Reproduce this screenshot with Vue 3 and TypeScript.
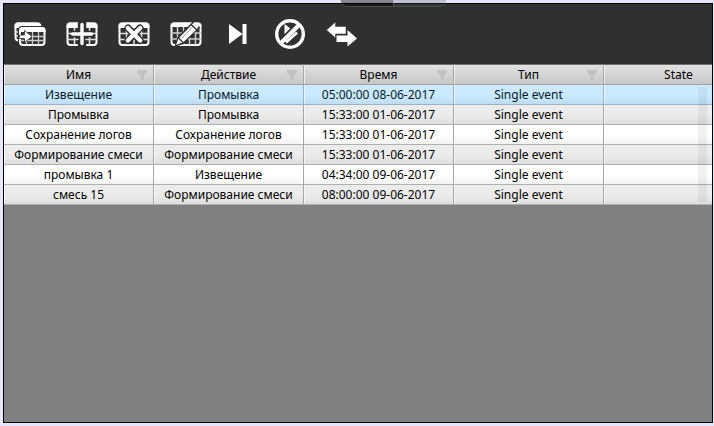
<script setup lang="ts">
import { ref } from 'vue'

interface EventRow {
  name: string
  action: string
  time: string
  type: string
  state: string
}

const columns = ['Имя', 'Действие', 'Время', 'Тип', 'State']

const rows: EventRow[] = [
  { name: 'Извещение', action: 'Промывка', time: '05:00:00 08-06-2017', type: 'Single event', state: '' },
  { name: 'Промывка', action: 'Промывка', time: '15:33:00 01-06-2017', type: 'Single event', state: '' },
  { name: 'Сохранение логов', action: 'Сохранение логов', time: '15:33:00 01-06-2017', type: 'Single event', state: '' },
  { name: 'Формирование смеси', action: 'Формирование смеси', time: '15:33:00 01-06-2017', type: 'Single event', state: '' },
  { name: 'промывка 1', action: 'Извещение', time: '04:34:00 09-06-2017', type: 'Single event', state: '' },
  { name: 'смесь 15', action: 'Формирование смеси', time: '08:00:00 09-06-2017', type: 'Single event', state: '' },
]

const selected = ref(0)
</script>

<template>
  <main class="page">
    <div class="handle"><span></span><span></span></div>
    <section class="panel">
      <nav class="toolbar">
        <button type="button" aria-label="Copy event">
          <svg viewBox="0 0 32 32">
            <path d="M4 22.500Q1.500 22 1.500 19.500V8Q1.500 5.500 4 5.500H24" fill="none" stroke="#fff" stroke-width="2" />
            <path d="M.5 10V8Q.5 4.500 4 4.500H24Q27 4.500 27.500 8H8Q5 8 4.500 10Z" fill="#fff" />
            <path d="M1 14H4M1 18H4" stroke="#ddd" stroke-width="1.500" />
            <rect x="6" y="10" width="24.500" height="17" rx="3" fill="#303030" stroke="#fff" stroke-width="2" />
            <path d="M5 14V12Q5.500 9 9 9H28Q31.500 9 31.500 12V14Z" fill="#fff" />
            <path d="M6 18.500H31M6 22.500H31M12.500 14V27M18.500 14V27M24.500 14V27" stroke="#ccc" stroke-width="1.300" />
            <path d="M5.500 17H10.500V12.500L18 18.500L10.500 24.500V20.500H5.500Z" fill="#fff" stroke="#303030" stroke-width=".8" />
          </svg>
        </button>
        <button type="button" aria-label="Add event">
          <svg viewBox="0 0 32 32">
            <rect x="1.500" y="5.500" width="29" height="21.500" rx="3" fill="none" stroke="#fff" stroke-width="2" />
            <path d="M.5 10V8Q.5 4.500 4 4.500H28Q31.500 4.500 31.500 8V10Z" fill="#fff" />
            <path d="M1 15.500H31M1 21.500H31M8.500 10V27M23.500 10V27" stroke="#ddd" stroke-width="1.600" />
            <path d="M16 3V10M16 22V29" stroke="#303030" stroke-width="8.500" />
            <path d="M16 4V27M5.500 16H26.500" stroke="#303030" stroke-width="6.500" />
            <path d="M16 6.500V25.500M6.500 16H25.500" stroke="#fff" stroke-width="3.400" stroke-linecap="round" />
          </svg>
        </button>
        <button type="button" aria-label="Delete event">
          <svg viewBox="0 0 32 32">
            <rect x="1.500" y="5.500" width="29" height="21.500" rx="3" fill="none" stroke="#fff" stroke-width="2" />
            <path d="M.5 10V8Q.5 4.500 4 4.500H28Q31.500 4.500 31.500 8V10Z" fill="#fff" />
            <path d="M1 15.500H31M1 21.500H31M8.500 10V27M16 10V27M23.500 10V27" stroke="#ddd" stroke-width="1.500" />
            <path d="M10 10L22 22.500M22 10L10 22.500" stroke="#303030" stroke-width="7" stroke-linecap="round" />
            <path d="M9.800 10L22.200 22.500M22.200 10L9.800 22.500" stroke="#fff" stroke-width="4.200" stroke-linecap="round" />
          </svg>
        </button>
        <button type="button" aria-label="Edit event">
          <svg viewBox="0 0 32 32">
            <rect x="1.500" y="5.500" width="29" height="21.500" rx="3" fill="none" stroke="#fff" stroke-width="2" />
            <path d="M.5 9V8Q.5 4.500 4 4.500H28Q31.500 4.500 31.500 8V9Z" fill="#fff" />
            <path d="M1 15H31M1 21H31M7.500 9V27M13.500 9V27M19.500 9V27M25.500 9V27" stroke="#ccc" stroke-width="1.500" />
            <path d="M4.500 29L7.500 19L23 3.500L30 9.500L13.500 26Z" fill="#303030" />
            <path d="M6 27L8.300 20.800L12.300 24.600Z" fill="#fff" />
            <path d="M9.200 19.800L21 7.500L26 12L13.500 24Z" fill="#fff" />
            <path d="M22 6.500L23.500 5Q25 4 27 6T28 9.500L26.800 11Z" fill="#fff" />
            <path d="M11.500 20.500L22 9.500" stroke="#666" stroke-width=".7" />
          </svg>
        </button>
        <button type="button" aria-label="Run next">
          <svg viewBox="0 0 32 32">
            <path d="M7 6L20.500 16L7 26ZM20.500 6H24.500V26H20.500Z" fill="#fff" />
          </svg>
        </button>
        <button type="button" aria-label="Disable event">
          <svg viewBox="0 0 32 32">
            <path d="M10.500 6L23.500 16L10.500 26Z" fill="#fff" />
            <path d="M5.500 26.500L26.500 5.500" stroke="#303030" stroke-width="7.500" />
            <path d="M6 26L26 6" stroke="#fff" stroke-width="4" />
            <path d="M12 24.500L23 14.500" stroke="#fff" stroke-width="2.600" />
            <circle cx="16" cy="16" r="13.300" fill="none" stroke="#fff" stroke-width="3.400" />
          </svg>
        </button>
        <button type="button" aria-label="Transfer events">
          <svg viewBox="0 0 32 32">
            <path d="M10.500 17.500H21.500V12L31 20.500L21.500 28.500V24H10.500Z" fill="#fff" />
            <path d="M.5 12L9.500 4V8.500H20V16H9.500V20Z" fill="#fff" stroke="#303030" stroke-width=".5" />
          </svg>
        </button>
      </nav>
      <div class="grid">
        <table>
          <thead>
            <tr>
              <th v-for="column in columns" :key="column" scope="col">
                {{ column }}
                <svg class="filter" viewBox="0 0 10 10">
                  <path d="M0 0H10V2L7 5.500V10H3.500V5.500L0 2Z" fill="#c2c2c2" />
                </svg>
              </th>
            </tr>
          </thead>
          <tbody>
            <tr v-for="(row, i) in rows" :key="i" :class="{ selected: i === selected }" @click="selected = i">
              <td>{{ row.name }}</td>
              <td>{{ row.action }}</td>
              <td>{{ row.time }}</td>
              <td>{{ row.type }}</td>
              <td>{{ row.state }}</td>
            </tr>
          </tbody>
        </table>
        <div class="scrollbar"></div>
      </div>
    </section>
  </main>
</template>

<style>
body {
  background: #e6e6fa;
}
</style>

<style scoped>
.page {
  box-sizing: border-box;
  display: flex;
  min-height: 100vh;
  padding: 3px 1px 3px 3px;
  position: relative;
}
.panel {
  background: #808080;
  border: 1px solid #000;
  flex: 1;
  min-width: 0;
}
.handle {
  border: 1px solid rgba(120, 120, 120, 0.35);
  border-radius: 0 0 14px 14px;
  border-top: 0;
  box-sizing: border-box;
  display: flex;
  height: 7px;
  left: 340px;
  overflow: hidden;
  position: absolute;
  top: 0;
  width: 106px;
}
.handle span {
  background: linear-gradient(rgba(0, 0, 0, 0.4), rgba(0, 0, 0, 0.5));
  flex: 1;
}
.handle span + span {
  background: rgba(70, 70, 90, 0.22);
  border-left: 1px solid rgba(150, 150, 150, 0.4);
}
.toolbar {
  align-items: center;
  background: #303030;
  display: flex;
  gap: 20px;
  height: 60px;
  padding-left: 10px;
}
.toolbar button {
  background: none;
  border: 0;
  height: 32px;
  padding: 0;
  width: 32px;
}
.toolbar svg {
  display: block;
  height: 32px;
  width: 32px;
}
.grid {
  overflow: hidden;
  position: relative;
}
table {
  border-collapse: separate;
  border-spacing: 0;
  font: 12px/18px "Noto Sans", "Open Sans", sans-serif;
  table-layout: fixed;
  width: 750px;
}
th,
td {
  border-bottom: 1px solid #b0b0b0;
  border-right: 1px solid #a6a6a6;
  box-shadow: inset 1px 0 rgba(255, 255, 255, 0.6);
  box-sizing: border-box;
  color: #000;
  height: 20px;
  padding: 1px 0 0;
  text-align: center;
}
th {
  background: linear-gradient(#e2e2e2, #c6c6c6);
  border-bottom-color: #a0a0a0;
  border-top: 1px solid #707070;
  font-weight: normal;
  height: 21px;
  position: relative;
}
.filter {
  height: 10px;
  position: absolute;
  right: 6px;
  top: 5px;
  width: 10px;
}
tbody tr {
  background: linear-gradient(#fff 50%, #f2f2f2);
}
tbody tr:nth-child(even) {
  background: linear-gradient(#ececec 50%, #dcdcdc);
}
tbody tr.selected {
  background: linear-gradient(#cceaff 50%, #bcdcf4);
}
.selected td {
  border-color: #9ab4c6;
  color: #04192a;
}
.scrollbar {
  background: rgba(0, 0, 0, 0.05);
  bottom: 3px;
  position: absolute;
  right: 5px;
  top: 23px;
  width: 9px;
}
</style>
